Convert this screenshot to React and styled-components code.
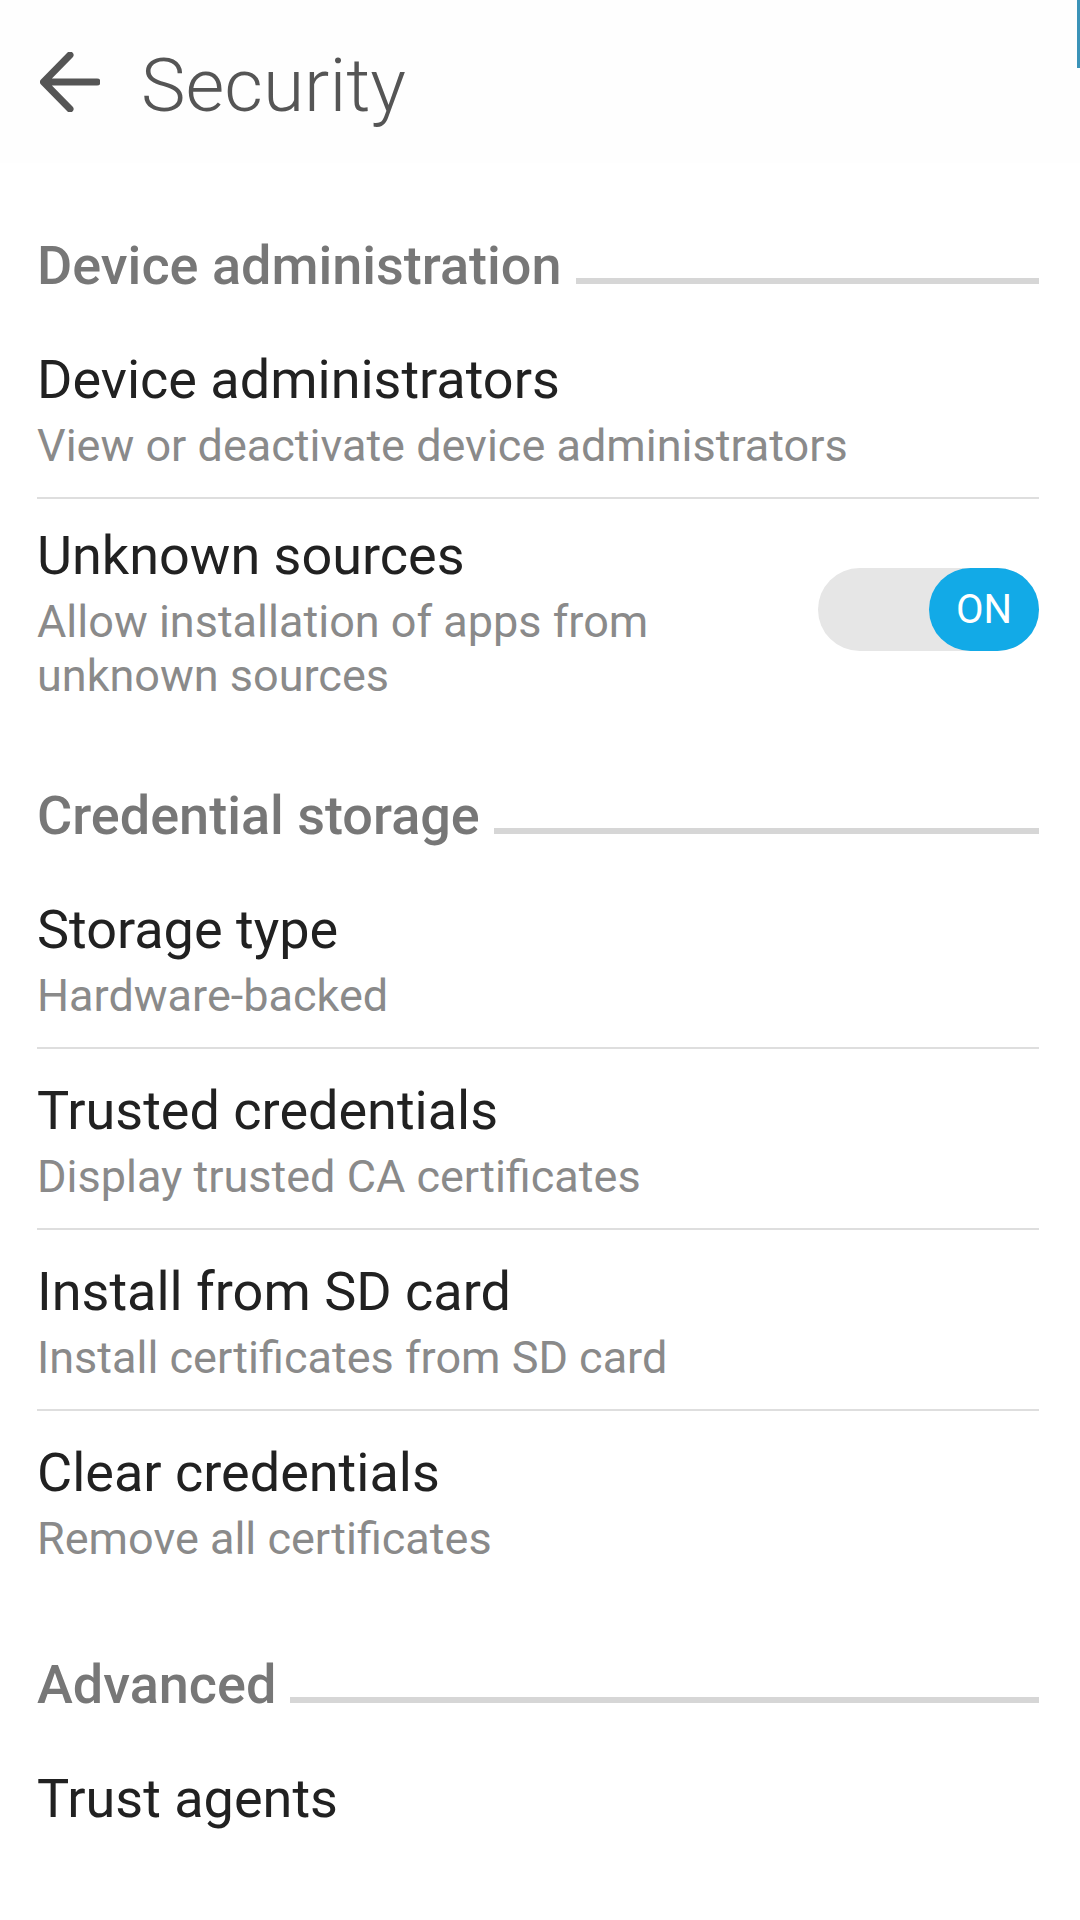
import React from "react";
import styled, { createGlobalStyle } from "styled-components";

const Global = createGlobalStyle`
  html, body { margin: 0; padding: 0; background: #ffffff; }
  body { font-family: Roboto, "Noto Sans", "Liberation Sans", sans-serif; -webkit-font-smoothing: antialiased; }
  * { box-sizing: border-box; }
`;

const Screen = styled.div`
  position: relative;
  width: 1080px;
  min-height: 1920px;
  background: #ffffff;
`;

const ScrollHint = styled.div`
  position: absolute;
  top: 0;
  right: 0;
  width: 3px;
  height: 68px;
  background: #3b93b8;
`;

const Header = styled.header`
  display: flex;
  align-items: center;
  height: 163px;
  padding-left: 40px;
  background: #fefefe;
`;

const BackButton = styled.div`
  width: 60px;
  height: 60px;
  display: flex;
  flex: none;
`;

const Title = styled.h1`
  margin: 0 0 0 41px;
  padding-top: 6px;
  font-size: 75px;
  line-height: 74px;
  font-weight: 300;
  color: #555555;
`;

const Content = styled.main`
  padding: 0 41px 0 37px;
`;

const SectionHeader = styled.div`
  display: flex;
  align-items: baseline;
  gap: 14px;
  padding-top: ${(p) => p.$space}px;
  padding-bottom: 21px;
`;

const SectionLabel = styled.span`
  font-size: 54px;
  line-height: 62px;
  font-weight: 500;
  color: #777777;
  white-space: nowrap;
`;

const SectionRule = styled.div`
  flex: 1;
  height: 6px;
  background: #d6d6d6;
`;

const Row = styled.div`
  display: flex;
  align-items: flex-start;
  gap: 40px;
  padding: ${(p) => p.$top ?? 31}px 0 24px;
  border-bottom: ${(p) => (p.$divider ? "2px solid #dedede" : "2px solid transparent")};
`;

const TextCol = styled.div`
  flex: 1;
  min-width: 0;
`;

const RowTitle = styled.div`
  font-size: 54px;
  line-height: 62px;
  color: #212121;
`;

const RowSub = styled.div`
  margin-top: 8px;
  font-size: 45px;
  line-height: 54px;
  color: #8a8a8a;
`;

const Track = styled.div`
  flex: none;
  margin-top: 43px;
  width: 221px;
  height: 83px;
  border-radius: 42px;
  background: #e6e6e6;
  display: flex;
  justify-content: flex-end;
`;

const Knob = styled.div`
  width: 110px;
  height: 83px;
  border-radius: 42px;
  background: #12aae7;
  color: #ffffff;
  font-size: 40px;
  display: flex;
  align-items: center;
  justify-content: center;
`;

const ArrowIcon = () => (
  <svg width="60" height="60" viewBox="0 0 60 60" fill="none">
    <path
      d="M57 30 H4 M30 3 L3.5 30 L30 57"
      stroke="#555555"
      strokeWidth="7"
      strokeLinecap="round"
      strokeLinejoin="round"
    />
  </svg>
);

const Toggle = ({ on }) => (
  <Track>
    <Knob>{on ? "ON" : "OFF"}</Knob>
  </Track>
);

const Section = ({ label, space }) => (
  <SectionHeader $space={space}>
    <SectionLabel>{label}</SectionLabel>
    <SectionRule />
  </SectionHeader>
);

const Item = ({ title, sub, divider, toggle, top }) => (
  <Row $divider={divider} $top={top}>
    <TextCol>
      <RowTitle>{title}</RowTitle>
      {sub && <RowSub>{sub}</RowSub>}
    </TextCol>
    {toggle && <Toggle on />}
  </Row>
);

export default function App() {
  return (
    <Screen>
      <Global />
      <ScrollHint />
      <Header>
        <BackButton>
          <ArrowIcon />
        </BackButton>
        <Title>Security</Title>
      </Header>
      <Content>
        <Section label="Device administration" space={72} />
        <Item
          title="Device administrators"
          sub="View or deactivate device administrators"
          divider
        />
        <Item
          title="Unknown sources"
          sub="Allow installation of apps from unknown sources"
          toggle
          top={26}
        />
        <Section label="Credential storage" space={56} />
        <Item title="Storage type" sub="Hardware-backed" divider />
        <Item
          title="Trusted credentials"
          sub="Display trusted CA certificates"
          divider
        />
        <Item
          title="Install from SD card"
          sub="Install certificates from SD card"
          divider
        />
        <Item title="Clear credentials" sub="Remove all certificates" />
        <Section label="Advanced" space={62} />
        <Item title="Trust agents" />
      </Content>
    </Screen>
  );
}
